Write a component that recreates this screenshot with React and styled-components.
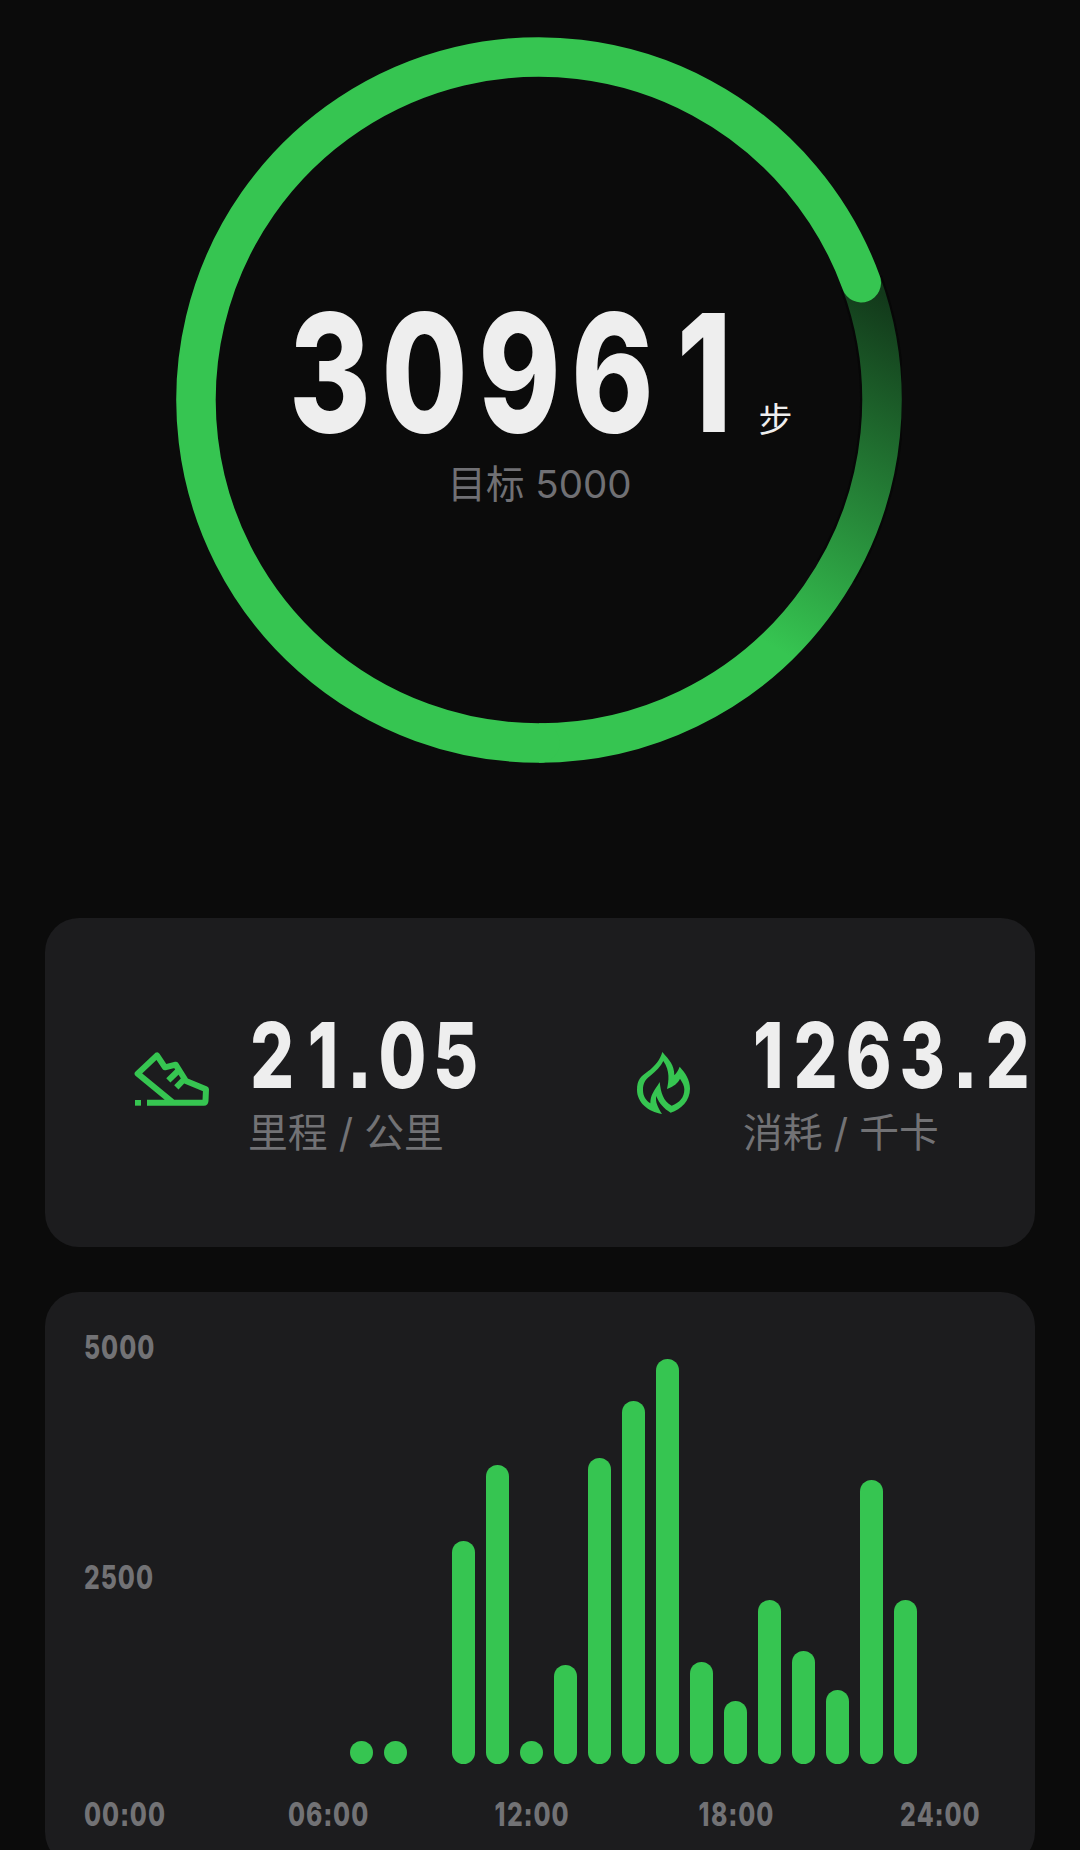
import React from 'react';
import styled, { createGlobalStyle } from 'styled-components';

const GREEN = '#36c551';

const HOURS = [
  0, 0, 0, 0, 0, 0, 0, 23, 23, 0, 223, 299,
  23, 99, 306, 363, 405, 102, 63, 164, 113, 74, 284, 164,
];

const TIMES = ['00:00', '06:00', '12:00', '18:00', '24:00'];

const GlobalStyle = createGlobalStyle`
  * {
    box-sizing: border-box;
  }
  body {
    margin: 0;
    background: #0b0b0b;
    font-family: Inter, 'Noto Sans CJK SC', sans-serif;
  }
`;

const Page = styled.main`
  width: 1080px;
  height: 1850px;
  overflow: hidden;
  display: flex;
  flex-direction: column;
  padding: 37px 45px 0;
`;

const Dial = styled.section`
  display: grid;
  grid-template-columns: 726px;
  margin: 0 0 155px 130.5px;
`;

const Ring = styled.svg`
  grid-area: 1 / 1;
  width: 726px;
  height: 726px;
`;

const Readout = styled.div`
  grid-area: 1 / 1;
  padding-top: 253.5px;
  display: flex;
  flex-direction: column;
`;

// narrow figures with square dots
const Digits = styled.span`
  display: block;
  font-family: Inter, sans-serif;
  font-feature-settings: 'ss07';
  font-kerning: none;
  font-weight: 800;
  font-size: ${props => props.$size}px;
  line-height: 1;
  letter-spacing: ${props => props.$spacing}em;
  margin-left: ${props => props.$shift || 0}px;
  color: ${props => props.$muted ? '#727275' : '#eeeeee'};
  white-space: nowrap;
  transform: scaleX(0.76);
  transform-origin: 0 0;
`;

// the figure 1 is narrower than the others, so it gets some room
const One = styled.span`
  padding: 0 0.03em 0 0.1em;
`;

const Figures = ({ value, ...props }) => (
  <Digits {...props}>
    {value.split(/(1)/).map((part, i) => part === '1' ? <One key={i}>1</One> : part)}
  </Digits>
);

const StepRow = styled.div`
  display: grid;
  grid-template-columns: 466px auto;
  align-items: baseline;
  padding-left: 113.5px;
`;

const Unit = styled.span`
  margin-left: 3.5px;
  font-size: 34px;
  line-height: 1;
  color: #eeeeee;
`;

const Goal = styled.div`
  margin-top: 5.5px;
  padding-left: 2px;
  font-size: 38.5px;
  line-height: 48px;
  text-align: center;
  color: #707074;
`;

const Card = styled.section`
  flex: none;
  background: #1c1c1e;
  border-radius: 34px;
`;

const StatsCard = styled(Card)`
  height: 329px;
  margin-bottom: 45px;
  display: flex;
  padding: 91.5px 0 0 75px;
`;

const Stat = styled.div`
  display: flex;
  flex: none;
  width: ${props => props.$width}px;
`;

const StatIcon = styled.svg`
  flex: none;
  width: 100px;
  height: 80px;
  margin: 30.5px ${props => props.$gap}px 0 0;
`;

const StatText = styled.div`
  display: flex;
  flex-direction: column;
`;

const StatLabel = styled.span`
  margin-top: 8px;
  font-size: 39.8px;
  line-height: 48px;
  color: #727275;
  white-space: nowrap;
`;

const ChartCard = styled(Card)`
  height: 574px;
  padding: 40px 39px 0;
`;

const Plot = styled.div`
  display: flex;
  height: 432px;
`;

const Axis = styled.div`
  width: 28px;
  flex: none;
  display: flex;
  flex-direction: column;
  gap: 197.500px;
`;

const Bars = styled.div`
  display: flex;
  align-items: flex-end;
  gap: 11px;
`;

const Bar = styled.div`
  width: 23px;
  flex: none;
  border-radius: 11.5px;
  background: ${GREEN};
`;

const Times = styled.div`
  display: grid;
  grid-template-columns: repeat(5, 204px);
  margin-top: 35px;
`;

const ShoeIcon = () => (
  <StatIcon $gap={28} viewBox="0 0 300 240" fill="none" stroke={GREEN} strokeWidth="18" strokeLinejoin="round">
    <path d="M81 188.500H251Q256 188 256.500 182L258 148L198 123L167 74L135 82L111 46L53 101L158 187" />
    <path d="M177 90L145 121M196 114L169 142" />
    <rect x="45" y="180" width="18" height="17" fill={GREEN} stroke="none" />
  </StatIcon>
);

const FlameIcon = () => (
  <StatIcon $gap={23} viewBox="0 0 300 240" fill={GREEN} fillRule="evenodd">
    <path d="M127 36C148 60 163 75 163 106C170 99 175 91 179 80C196 99 210 119 210 146C210 182 184 207 152 218C132 206 117 190 109 168C105 186 114 203 126 222C84 215 51 187 51 150C51 120 62 110 84 94C104 79 121 59 127 36ZM130 63C122 80 108 93 91 107C75 119 69 131 69 150C69 169 78 182 91 190C91 163 103 153 119 126C123 159 129 182 155 197C178 189 193 173 193 148C193 137 187 127 180 116C173 130 162 139 141 147C146 123 151 94 130 63Z" />
  </StatIcon>
);

const StepRing = () => (
  <Ring viewBox="0 0 726 726" fill="none">
    <defs>
      <linearGradient id="tail" gradientUnits="userSpaceOnUse" x1="701" y1="253" x2="521" y2="566">
        <stop offset="0" stopColor="#12381a" />
        <stop offset="1" stopColor={GREEN} />
      </linearGradient>
    </defs>
    <path d="M685.300 245.700A343 343 0 0 1 660.100 534.500" stroke="#070707" strokeWidth="44" />
    <path d="M685.300 245.700A343 343 0 0 1 363 706" stroke="url(#tail)" strokeWidth="39.500" />
    <path d="M364 706A343 343 0 1 1 685.300 245.700" stroke={GREEN} strokeWidth="39.500" strokeLinecap="round" />
  </Ring>
);

const App = () => {
  return (
    <>
      <GlobalStyle />
      <Page>
        <Dial>
          <StepRing />
          <Readout>
            <StepRow>
              <Figures $size={164} $spacing={0.085} value="30961" />
              <Unit>步</Unit>
            </StepRow>
            <Goal>目标 5000</Goal>
          </Readout>
        </Dial>

        <StatsCard>
          <Stat $width={500}>
            <ShoeIcon />
            <StatText>
              <Figures $size={91.2} $shift={2} $spacing={0.097} value="21.05" />
              <StatLabel>里程 / 公里</StatLabel>
            </StatText>
          </Stat>
          <Stat $width={415}>
            <FlameIcon />
            <StatText>
              <Figures $size={91.2} $shift={2.5} $spacing={0.115} value="1263.2" />
              <StatLabel>消耗 / 千卡</StatLabel>
            </StatText>
          </Stat>
        </StatsCard>

        <ChartCard>
          <Plot>
            <Axis>
              <Figures $size={32.5} $spacing={0.04} $muted value="5000" />
              <Figures $size={32.5} $spacing={0.04} $muted value="2500" />
            </Axis>
            <Bars>
              {HOURS.map((height, hour) => (
                <Bar key={hour} style={{ height }} />
              ))}
            </Bars>
          </Plot>
          <Times>
            {TIMES.map(time => (
              <Figures key={time} $size={32.5} $spacing={0.04} $muted value={time} />
            ))}
          </Times>
        </ChartCard>
      </Page>
    </>
  );
};

export default App;
